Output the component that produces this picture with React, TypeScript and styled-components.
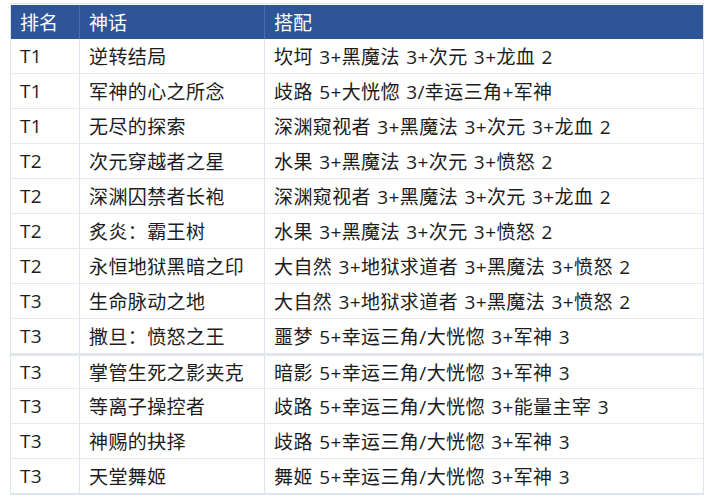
import styled, { createGlobalStyle } from "styled-components";

const rows: { tier: string; name: string; combo: string; split?: boolean }[] = [
  { tier: "T1", name: "逆转结局", combo: "坎坷 3+黑魔法 3+次元 3+龙血 2" },
  { tier: "T1", name: "军神的心之所念", combo: "歧路 5+大恍惚 3/幸运三角+军神" },
  { tier: "T1", name: "无尽的探索", combo: "深渊窥视者 3+黑魔法 3+次元 3+龙血 2" },
  { tier: "T2", name: "次元穿越者之星", combo: "水果 3+黑魔法 3+次元 3+愤怒 2" },
  { tier: "T2", name: "深渊囚禁者长袍", combo: "深渊窥视者 3+黑魔法 3+次元 3+龙血 2" },
  { tier: "T2", name: "炙炎：霸王树", combo: "水果 3+黑魔法 3+次元 3+愤怒 2" },
  { tier: "T2", name: "永恒地狱黑暗之印", combo: "大自然 3+地狱求道者 3+黑魔法 3+愤怒 2" },
  { tier: "T3", name: "生命脉动之地", combo: "大自然 3+地狱求道者 3+黑魔法 3+愤怒 2" },
  { tier: "T3", name: "撒旦：愤怒之王", combo: "噩梦 5+幸运三角/大恍惚 3+军神 3" },
  { tier: "T3", name: "掌管生死之影夹克", combo: "暗影 5+幸运三角/大恍惚 3+军神 3", split: true },
  { tier: "T3", name: "等离子操控者", combo: "歧路 5+幸运三角/大恍惚 3+能量主宰 3" },
  { tier: "T3", name: "神赐的抉择", combo: "歧路 5+幸运三角/大恍惚 3+军神 3" },
  { tier: "T3", name: "天堂舞姬", combo: "舞姬 5+幸运三角/大恍惚 3+军神 3" },
];

function App() {
  return (
    <>
      <GlobalStyle />
      <Page>
        <Frame>
          <HeadRow>
            <HeadCell>排名</HeadCell>
            <HeadCell>神话</HeadCell>
            <HeadCell>搭配</HeadCell>
          </HeadRow>
          {rows.map((r, i) => (
            <Row key={i} $split={r.split}>
              <Cell>{r.tier}</Cell>
              <Cell>{r.name}</Cell>
              <Cell>{r.combo}</Cell>
            </Row>
          ))}
        </Frame>
      </Page>
    </>
  );
}

export default App;

const GlobalStyle = createGlobalStyle`
  body {
    margin: 0;
    background: #fff;
    font-family: "Open Sans", "Noto Sans CJK SC", sans-serif;
  }
`;

const Page = styled.div`
  padding: 3px 0 0 10px;
`;

const Frame = styled.div`
  width: 694px;
  border: 1px solid #dfe5ee;
  border-bottom-width: 2px;
  box-sizing: border-box;
`;

const HeadRow = styled.div`
  display: grid;
  grid-template-columns: 69px 185px 1fr;
  height: 34px;
  margin-top: 1px;
  background: #2e5597;
  color: #fff;
`;

const HeadCell = styled.div`
  display: flex;
  align-items: center;
  padding-left: 9px;
  font-size: 19px;
  border-right: 1px solid #4a6ca8;
  &:last-child {
    border-right: none;
  }
`;

const Row = styled.div<{ $split?: boolean }>`
  display: grid;
  grid-template-columns: 69px 185px 1fr;
  height: 35px;
  box-sizing: border-box;
  border-top: ${(p) => (p.$split ? "3px solid #e3e7ed" : "1px solid #e6e9ee")};
  &:nth-child(2) {
    border-top: none;
    height: 34px;
  }
`;

const Cell = styled.div`
  display: flex;
  align-items: center;
  padding-left: 9px;
  font-size: 19px;
  letter-spacing: 0.4px;
  word-spacing: 1px;
  color: #1c1c1c;
  white-space: nowrap;
  border-right: 1px solid #dde4ee;
  &:last-child {
    border-right: none;
  }
`;
